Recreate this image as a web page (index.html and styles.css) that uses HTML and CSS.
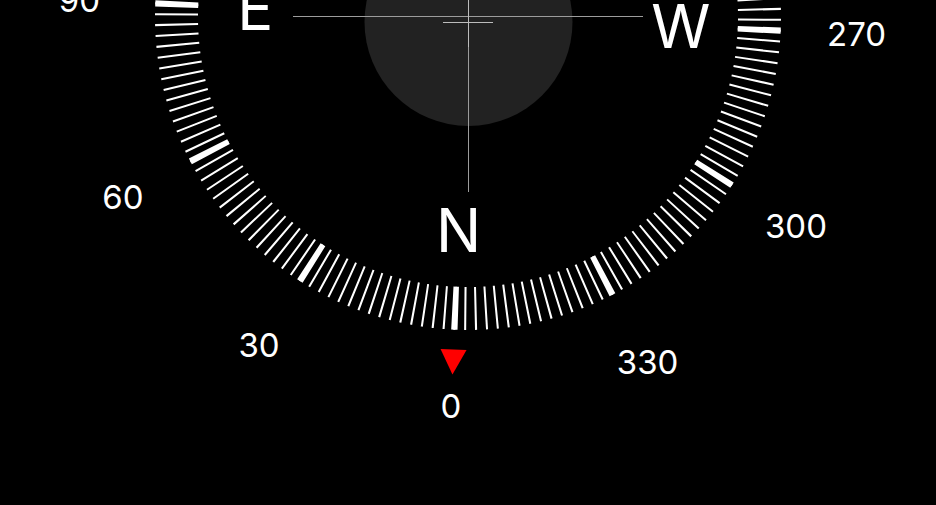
FILE: index.html
```html
<!DOCTYPE html>
<html lang="en">

<head>
    <meta charset="UTF-8">
    <meta name="viewport" content="width=device-width, initial-scale=1.0">
    <title>Compass</title>
    <link rel="stylesheet" href="styles.css">
</head>

<body>
    <div class="compass">
        <svg class="dial" width="936" height="505" viewBox="0 0 936 505">
            <!-- level bubble -->
            <circle class="bubble" cx="468.5" cy="22" r="104" />

            <!-- ring, heading 182.5deg -->
            <g transform="rotate(92.5 468 17)">
                <circle class="ticks" cx="468" cy="17" r="291.5" pathLength="360" />
                <circle class="ticks-major" cx="468" cy="17" r="291.5" pathLength="360" />
            </g>

            <polygon class="marker" points="-13,-12.5 13,-12.5 0,12.5" transform="translate(453 362) rotate(2.5)" />

            <g class="degrees">
                <text x="451" y="417.6">0</text>
                <text x="259" y="357">30</text>
                <text x="123" y="208.6">60</text>
                <text x="79.4" y="12">90</text>
                <text x="856.6" y="46">270</text>
                <text x="796" y="238">300</text>
                <text x="647.6" y="374">330</text>
            </g>

            <g class="cardinals">
                <text x="458.7" y="251.6">N</text>
                <text x="255.2" y="29.5">E</text>
                <text x="680.8" y="48.1">W</text>
            </g>

            <!-- crosshair -->
            <g class="cross">
                <line x1="293" y1="16.5" x2="643" y2="16.5" />
                <line x1="468.5" y1="-158" x2="468.5" y2="192" />
                <line class="cross-small" x1="443" y1="22.5" x2="493" y2="22.5" />
                <line class="cross-small" x1="468.5" y1="-3" x2="468.5" y2="47" />
            </g>
        </svg>
    </div>
</body>

</html>
```

FILE: styles.css
```css
* {
    padding: 0;
    margin: 0;
}

body {
    background-color: #000;
    overflow: hidden;
}

.compass {
    width: 936px;
    height: 505px;
}

.dial {
    display: block;
}

.bubble {
    fill: #222;
}

/* 2 degree ticks */
.ticks {
    fill: none;
    stroke: #fff;
    stroke-width: 43;
    stroke-dasharray: 0.4 1.6;
    stroke-dashoffset: 0.2;
}

/* 30 degree ticks */
.ticks-major {
    fill: none;
    stroke: #fff;
    stroke-width: 43;
    stroke-dasharray: 1.18 28.82;
    stroke-dashoffset: 0.59;
}

.marker {
    fill: #ff0000;
}

.degrees text,
.cardinals text {
    fill: #fff;
    font-family: Inter, "Liberation Sans", sans-serif;
    text-anchor: middle;
}

.degrees text {
    font-size: 33px;
}

.cardinals text {
    font-size: 60px;
}

.cross line {
    stroke: #9c9c9c;
    stroke-width: 1;
}

.cross .cross-small {
    stroke: #bdbdbd;
}
```
